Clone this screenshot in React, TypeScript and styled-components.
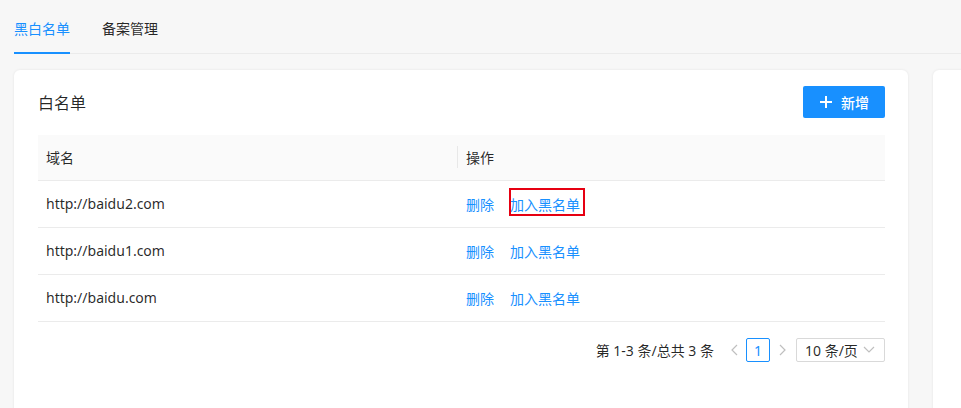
import * as React from 'react';
import styled, { createGlobalStyle } from 'styled-components';

const GlobalStyle = createGlobalStyle`
  body {
    margin: 0;
    background: #f7f7f7;
    font-family: "Noto Sans", "Noto Sans CJK SC", sans-serif;
    font-size: 14px;
    color: rgba(0, 0, 0, 0.85);
    overflow: hidden;
  }
`;

const Page = styled.div`
  padding: 0 0 0 14px;
`;

const TabBar = styled.div`
  display: flex;
  gap: 32px;
  height: 53px;
  border-bottom: 1px solid #ebebeb;
`;

const Tab = styled.div<{ active?: boolean }>`
  display: flex;
  align-items: center;
  padding-top: 3px;
  height: 54px;
  box-sizing: border-box;
  font-size: 14px;
  color: ${p => (p.active ? '#1890ff' : 'rgba(0,0,0,0.85)')};
  border-bottom: 2px solid ${p => (p.active ? '#1890ff' : 'transparent')};
`;

const CardRow = styled.div`
  display: flex;
  gap: 25px;
  padding-top: 16px;
`;

const Card = styled.div<{ width: number }>`
  flex: 0 0 ${p => p.width}px;
  height: 360px;
  background: #fff;
  border-radius: 6px;
  box-shadow: 0 0 3px rgba(0, 0, 0, 0.08);
  padding: 16px 23px 0 24px;
  box-sizing: border-box;
`;

const CardHeader = styled.div`
  display: flex;
  justify-content: space-between;
  align-items: center;
  height: 32px;
  margin-bottom: 17px;
`;

const CardTitle = styled.div`
  font-size: 16px;
  color: rgba(0, 0, 0, 0.85);
`;

const PrimaryButton = styled.button`
  display: flex;
  align-items: center;
  gap: 8px;
  height: 32px;
  padding: 0 16px;
  border: none;
  border-radius: 2px;
  background: #1890ff;
  color: #fff;
  font-family: inherit;
  font-size: 14px;
  font-weight: 500;
`;

const Table = styled.div`
  width: 847px;
`;

const Row = styled.div<{ head?: boolean }>`
  display: grid;
  grid-template-columns: 420px 1fr;
  height: ${p => (p.head ? 45 : 46)}px;
  background: ${p => (p.head ? '#fafafa' : '#fff')};
  border-bottom: 1px solid #ebebeb;
`;

const Cell = styled.div<{ divider?: boolean }>`
  display: flex;
  align-items: center;
  gap: 16px;
  padding: 0 8px 1px;
  position: relative;
  ${p =>
    p.divider &&
    `&::before {
      content: '';
      position: absolute;
      left: -1px;
      top: 11px;
      height: 22px;
      width: 1px;
      background: #e8e8e8;
    }`}
`;

const Link = styled.span<{ marked?: boolean }>`
  color: #1890ff;
  position: relative;
  ${p =>
    p.marked &&
    `&::after {
      content: '';
      position: absolute;
      top: -6px;
      bottom: -2px;
      left: -1px;
      right: -5px;
      border: 2px solid #e60012;
    }`}
`;

const Pager = styled.div`
  display: flex;
  justify-content: flex-end;
  align-items: center;
  height: 24px;
  margin-top: 16px;
`;

const Total = styled.span`
  margin-right: 8px;
`;

const Arrow = styled.span`
  width: 24px;
  height: 24px;
  display: flex;
  align-items: center;
  justify-content: center;
`;

const PageItem = styled.span`
  width: 24px;
  height: 24px;
  box-sizing: border-box;
  border: 1px solid #1890ff;
  border-radius: 2px;
  color: #1890ff;
  display: flex;
  align-items: center;
  justify-content: center;
`;

const SizeSelect = styled.div`
  margin-left: 2px;
  width: 89px;
  height: 24px;
  box-sizing: border-box;
  border: 1px solid #d9d9d9;
  border-radius: 2px;
  display: flex;
  align-items: center;
  justify-content: space-between;
  padding: 0 9px 0 8px;
`;

const rows = ['http://baidu2.com', 'http://baidu1.com', 'http://baidu.com'];

const Chevron = ({ dir }: { dir: 'left' | 'right' | 'down' }) => {
  const d =
    dir === 'left' ? 'M7 1 L2 6 L7 11' : dir === 'right' ? 'M2 1 L7 6 L2 11' : 'M1 3 L6 8 L11 3';
  const w = dir === 'down' ? 12 : 9;
  return (
    <svg width={w} height="12" viewBox={`0 0 ${w} 12`} fill="none">
      <path d={d} stroke="#bfbfbf" strokeWidth="1.2" />
    </svg>
  );
};

export default function App() {
  return (
    <Page>
      <GlobalStyle />
      <TabBar>
        <Tab active>黑白名单</Tab>
        <Tab>备案管理</Tab>
      </TabBar>
      <CardRow>
        <Card width={894}>
          <CardHeader>
            <CardTitle>白名单</CardTitle>
            <PrimaryButton>
              <svg width="14" height="14" viewBox="0 0 14 14">
                <path d="M7 1 V13 M1 7 H13" stroke="#fff" strokeWidth="2" />
              </svg>
              新增
            </PrimaryButton>
          </CardHeader>
          <Table>
            <Row head>
              <Cell>域名</Cell>
              <Cell divider>操作</Cell>
            </Row>
            {rows.map((r, i) => (
              <Row key={r}>
                <Cell>{r}</Cell>
                <Cell>
                  <Link>删除</Link>
                  <Link marked={i === 0}>加入黑名单</Link>
                </Cell>
              </Row>
            ))}
          </Table>
          <Pager>
            <Total>第 1-3 条/总共 3 条</Total>
            <Arrow>
              <Chevron dir="left" />
            </Arrow>
            <PageItem>1</PageItem>
            <Arrow>
              <Chevron dir="right" />
            </Arrow>
            <SizeSelect>
              <span>10 条/页</span>
              <Chevron dir="down" />
            </SizeSelect>
          </Pager>
        </Card>
        <Card width={100} />
      </CardRow>
    </Page>
  );
}
